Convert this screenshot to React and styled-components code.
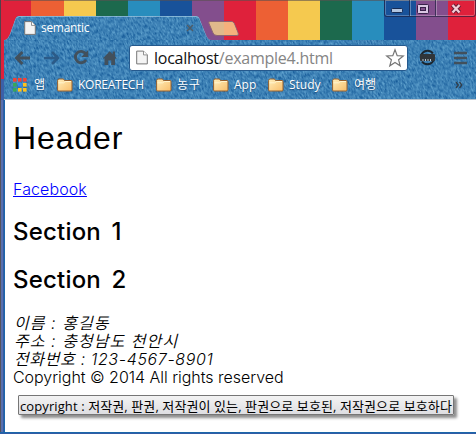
import React from 'react';
import styled, { createGlobalStyle } from 'styled-components';

const denim = (w, h) =>
  `url("data:image/svg+xml,${encodeURIComponent(
    `<svg xmlns='http://www.w3.org/2000/svg' width='${w}' height='${h}'><filter id='d' x='0' y='0' width='100%' height='100%' color-interpolation-filters='sRGB'><feTurbulence type='fractalNoise' baseFrequency='0.7 0.26' numOctaves='2' seed='7'/><feColorMatrix values='0.5 0 0 0 -0.01  0.48 0 0 0 0.265  0.36 0 0 0 0.53  0 0 0 0 1'/></filter><g transform='rotate(-24)'><rect x='-260' y='-60' width='900' height='420' filter='url(#d)'/></g></svg>`
  )}")`;

const GlobalStyle = createGlobalStyle`
  body { margin: 0; background: #fff; overflow: hidden; }
  * { box-sizing: border-box; }
`;

const Window = styled.div`
  position: relative;
  width: 476px;
  height: 434px;
  display: flex;
  flex-direction: column;
  overflow: hidden;
  background: #fff;
  font-family: 'Open Sans', 'Noto Sans CJK KR', sans-serif;
`;

const TitleBar = styled.header`
  height: 40px;
  flex: none;
  display: flex;
  align-items: flex-start;
  padding: 15px 0 0 5px;
  border-top: 1px solid rgba(90, 80, 80, 0.6);
  background: linear-gradient(90deg,
    #df213b 0 31px, #ed6034 31px 64px, #f5c94f 64px 96px, #1c694d 96px 128px,
    #288dbd 128px 160px, #18529a 160px 192px, #834e8d 192px 224px, #df213b 224px 256px,
    #ed6034 256px 288px, #f5c94f 288px 320px, #1c694d 320px 352px, #288dbd 352px 384px,
    #18529a 384px 416px, #834e8d 416px 448px, #df213b 448px);
`;

const Tab = styled.div`
  position: relative;
  width: 206px;
  height: 24px;
  display: flex;
  align-items: center;
  padding: 0 17px 0 19px;
  color: #fff;
  background: ${denim(476, 100)};
  clip-path: path('M0 24 Q3 23 5 18 L10 4 Q11 0 14 0 H191 Q194 0 195 4 L201 19 Q203 24 206 24 Z');
`;

const TabEdge = styled.svg`
  position: absolute;
  inset: 0;
`;

const TabTitle = styled.span`
  font-size: 12px;
  line-height: 16px;
  margin-left: 5px;
  letter-spacing: -0.3px;
  flex: 1;
`;

const NewTab = styled.svg`
  margin: 5px 0 0 -3px;
`;

const Controls = styled.div`
  position: absolute;
  top: 0;
  right: 0;
  width: 92px;
  height: 17px;
  display: flex;
  border: 1px solid rgba(30, 30, 60, 0.65);
  border-top: 0;
  border-radius: 0 0 3px 3px;
  box-shadow: inset 0 0 0 1px rgba(255, 255, 255, 0.25);
`;

const Control = styled.div`
  width: ${({ $w }) => $w}px;
  display: flex;
  align-items: center;
  justify-content: center;
  border-left: ${({ $first }) => ($first ? '0' : '1px solid rgba(25, 30, 60, .65)')};
  box-shadow: ${({ $first }) => ($first ? 'none' : 'inset 1px 0 rgba(255,255,255,.3)')};
`;

const Chrome = styled.div`
  height: 60px;
  flex: none;
  margin-left: 4px;
  background: ${denim(476, 100)};
  border-bottom: 1px solid #b9c4cf;
`;

const Toolbar = styled.nav`
  height: 35px;
  display: flex;
  align-items: center;
  padding: 0 0 0 9px;
`;

const NavIcon = styled.svg`
  flex: none;
  margin-right: ${({ $gap }) => $gap}px;
`;

const AddressBar = styled.div`
  width: 279px;
  height: 26px;
  flex: none;
  display: flex;
  align-items: center;
  padding: 0 2px 0 6px;
  background: #fff;
  border: 1px solid #25598d;
  border-radius: 3px;
  margin: 0 10px;
`;

const Url = styled.span`
  flex: 1;
  margin-left: 6px;
  white-space: nowrap;
  font-size: 16px;
  line-height: 22px;
  letter-spacing: -0.25px;
  color: #858585;
  b { font-weight: 400; color: #111; }
`;

const Bookmarks = styled.div`
  height: 20px;
  display: flex;
  align-items: center;
  padding-left: 9px;
  color: #fff;
  font-size: 12px;
  line-height: 18px;
  white-space: nowrap;
`;

const Bookmark = styled.div`
  width: ${({ $w }) => $w}px;
  flex: none;
  display: flex;
  align-items: center;
  gap: ${({ $gap }) => $gap || 6}px;
  letter-spacing: ${({ $ls }) => $ls || 0}px;
  text-shadow: 0 1px 1px rgba(10, 40, 80, 0.5);
`;

const More = styled.svg`
  margin-left: auto;
  margin-right: 13px;
`;

const Body = styled.div`
  flex: 1;
  display: flex;
  background: linear-gradient(90deg, #55535d 0 1px, #5870ae 1px 3px, #315ca5 3px 4px, #1b67aa 4px 5px, #fff 5px);
`;

const Page = styled.main`
  flex: 1;
  margin-left: 5px;
  padding: 20px 0 0 8px;
  color: #000;
  font-family: Inter, 'Noto Sans CJK KR', sans-serif;
  white-space: nowrap;
`;

const Header = styled.h1`
  margin: 0 0 24px;
  font-family: 'Liberation Sans', sans-serif;
  font-size: 32px;
  font-weight: 400;
  line-height: 36px;
  letter-spacing: 0.9px;
`;

const Link = styled.a`
  display: block;
  width: fit-content;
  font-size: 16px;
  font-weight: 300;
  line-height: 18px;
  letter-spacing: 0.1px;
  color: #00f;
  text-decoration: underline;
`;

const Section = styled.h2`
  margin: 20px 0 0;
  font-size: 24px;
  line-height: 28px;
  letter-spacing: 0.2px;
  word-spacing: 4px;
  font-weight: 500;
`;

const Address = styled.address`
  margin-top: 20px;
  padding-left: 1px;
  font-size: 16px;
  font-weight: 350;
  line-height: 18px;
  letter-spacing: 1.05px;
`;

const Phone = styled.span`
  letter-spacing: 0.65px;
`;

const Copyright = styled.footer`
  font-size: 16px;
  font-weight: 300;
  line-height: 18px;
  letter-spacing: -0.03px;
`;

const Tooltip = styled.div`
  position: absolute;
  left: 18px;
  top: 395px;
  width: 436px;
  height: 20px;
  padding-left: 1px;
  border: 1px solid #767676;
  border-radius: 1px;
  background: linear-gradient(#f3f3f3, #dedee2);
  box-shadow: 3px 3px 3px rgba(0, 0, 0, 0.45);
  font-size: 13px;
  line-height: 20px;
  letter-spacing: 0.1px;
  white-space: nowrap;
  color: #000;
`;

const LeftEdge = styled.div`
  position: absolute;
  left: 0;
  top: 0;
  width: 4px;
  height: 100px;
  background: linear-gradient(90deg, #55404a 0 1px, transparent 1px), linear-gradient(#df213b 0 79px, #3b60a8 79px);
`;

const BottomEdge = styled.div`
  height: 2px;
  flex: none;
  background: linear-gradient(#1b67aa 0 1px, #315ca5 1px);
`;

const FileIcon = ({ w = 12, h = 14 }) => (
  <svg width={w} height={h} viewBox="0 0 12 14">
    <path d="M.7 .6H7.5L11.3 4.4V13.4H.7Z" fill="#f4f4f4" stroke="#777" strokeWidth="1" />
    <path d="M7.5 .6V4.4H11.3" fill="#fff" stroke="#777" strokeWidth=".8" />
  </svg>
);

const Folder = () => (
  <svg width="16" height="14" viewBox="0 0 16 14">
    <defs>
      <linearGradient id="folder" x2="1" y2="1">
        <stop stopColor="#fff0bd" />
        <stop offset="1" stopColor="#f8bd69" />
      </linearGradient>
    </defs>
    <path d="M.6 12V2.5L1.5 1H6.5L7.5 2.5H14Q15 2.5 15 3.5V12Q15 13 14 13H1.6Q.6 13 .6 12Z" fill="url(#folder)" stroke="#96602e" />
    <path d="M1.5 4.8H6.8L8.2 3.5H14" fill="none" stroke="#fff5cf" />
  </svg>
);

const appColors = ['#f34235', '#f34235', '#f34235', '#35a85a', '#3189f5', '#ffc21a', '#35a85a', '#ffc21a', '#ffc21a'];

export default function App() {
  return (
    <>
      <GlobalStyle />
      <Window>
        <TitleBar>
          <Tab>
            <TabEdge width="206" height="24">
              <path d="M0 24Q3 23 5 18L10 4Q11 .5 14 .5H191Q194 .5 195 4L201 19Q203 24 206 24" fill="none" stroke="#9bc5df" strokeOpacity=".75" />
            </TabEdge>
            <FileIcon />
            <TabTitle>semantic</TabTitle>
            <svg width="8" height="8"><path d="M1 1L7 7M7 1L1 7" stroke="#4f5c66" strokeWidth="1.5" /></svg>
          </Tab>
          <NewTab width="32" height="15">
            <path d="M2 .5H23Q25 .5 26 2L30 12Q31 14.5 29 14.5H9Q6 14.5 5 12L.8 2Q.2 .5 2 .5Z" fill="#e0b98b" stroke="#8d6573" />
            <path d="M16 1H23Q25 1 26 3L29.5 12Q30 14 28 14H16Z" fill="#f5b07c" />
          </NewTab>
        </TitleBar>
        <LeftEdge />
        <Controls>
          <Control $first $w={24}>
            <svg width="12" height="16"><rect x=".5" y="8.5" width="11" height="4" rx="1" fill="#b1c5e0" stroke="#172b52" /></svg>
          </Control>
          <Control $w={26}>
            <svg width="12" height="11"><rect x=".5" y="1.5" width="11" height="9" rx="1" fill="#d9c6e2" stroke="#382149" /><rect x="3.5" y="4.5" width="5" height="3" fill="#834e8d" stroke="#382149" /></svg>
          </Control>
          <Control $w={40}>
            <svg width="12" height="11" viewBox="0 0 12 11">
              <path d="M2.5 2L9.5 9.5M9.5 2L2.5 9.5" stroke="#661d36" strokeWidth="4.2" />
              <path d="M2.5 2L9.5 9.5M9.5 2L2.5 9.5" stroke="#f2ccd6" strokeWidth="2.3" />
            </svg>
          </Control>
        </Controls>

        <Chrome>
          <Toolbar>
            <NavIcon $gap={13} width="18" height="16"><path d="M9.5 2L3.5 8L9.5 14M4 8H17" fill="none" stroke="#42505c" strokeWidth="2.9" /></NavIcon>
            <NavIcon $gap={13} width="16" height="16"><path d="M8 2L14 8L8 14M13.5 8H0" fill="none" stroke="#2c5b88" strokeWidth="2.6" /></NavIcon>
            <NavIcon $gap={13} width="17" height="17">
              <path d="M12.5 4.4A5.7 5.7 0 1 0 13 11" fill="none" stroke="#42505c" strokeWidth="2.9" />
              <path d="M15.2 1V8H8.2Z" fill="#42505c" />
            </NavIcon>
            <NavIcon $gap={0} width="16" height="16"><path d="M6.7 1.2L9.7 4.2V1.5H12V6.4L14 8.5H12V15H8.2V10.5H5.2V15H1.5V8.5H-.2Z" fill="#42505c" /></NavIcon>
            <AddressBar>
              <FileIcon w={12} h={15} />
              <Url><b>localhost</b>/example4.html</Url>
              <svg width="20" height="20" viewBox="0 0 20 20"><path d="M10 1.8L12.2 7.6L18.3 7.9L13.6 11.8L15.2 17.8L10 14.4L4.8 17.8L6.4 11.8L1.7 7.9L7.8 7.6Z" fill="#fff" stroke="#777" strokeWidth="1.2" /></svg>
            </AddressBar>
            <NavIcon $gap={18} width="18" height="17">
              <circle cx="9.5" cy="8.5" r="6.8" fill="none" stroke="#1b2630" strokeWidth="2" strokeDasharray="17 4" />
              <rect x="2" y="5" width="15" height="7" rx="1" fill="#30353a" />
              <path d="M5 10V12M7.5 10V12M10 10V12M12.5 10V12" stroke="#b4c4cf" />
            </NavIcon>
            <NavIcon $gap={0} width="14" height="14"><path d="M0 2H13M0 7H13M0 12H13" stroke="#42505c" strokeWidth="2.6" /></NavIcon>
          </Toolbar>
          <Bookmarks>
            <Bookmark $w={44} $gap={7}>
              <svg width="14" height="14">
                {appColors.map((c, i) => <rect key={i} x={(i % 3) * 5} y={Math.floor(i / 3) * 5} width="3.6" height="3.6" fill={c} />)}
              </svg>
              앱
            </Bookmark>
            <Bookmark $w={99} $gap={5} $ls={-0.25}><Folder />KOREATECH</Bookmark>
            <Bookmark $w={57} $gap={5} $ls={0.8}><Folder />농구</Bookmark>
            <Bookmark $w={55} $gap={5}><Folder />App</Bookmark>
            <Bookmark $w={64} $gap={5}><Folder />Study</Bookmark>
            <Bookmark $w={54}><Folder />여행</Bookmark>
            <More width="8" height="8"><path d="M1 1L3.3 4L1 7M4.5 1L6.8 4L4.5 7" fill="none" stroke="#333f4a" strokeWidth="1.3" /></More>
          </Bookmarks>
        </Chrome>

        <Body>
          <Page>
            <Header>Header</Header>
            <Link>Facebook</Link>
            <Section>Section 1</Section>
            <Section>Section 2</Section>
            <Address>
              이름 : 홍길동<br />
              주소 : 충청남도 천안시<br />
              <Phone>전화번호 : 123-4567-8901</Phone>
            </Address>
            <Copyright>Copyright © 2014 All rights reserved</Copyright>
          </Page>
        </Body>
        <BottomEdge />
        <Tooltip>copyright : 저작권, 판권, 저작권이 있는, 판권으로 보호된, 저작권으로 보호하다</Tooltip>
      </Window>
    </>
  );
}
